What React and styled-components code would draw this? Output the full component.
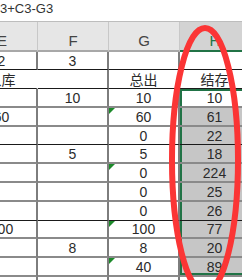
import styled, { createGlobalStyle } from "styled-components";

const GlobalStyle = createGlobalStyle`
  html, body {
    margin: 0;
    padding: 0;
    background: #ffffff;
    overflow: hidden;
  }
  body {
    font-family: "Liberation Sans", "Noto Sans CJK SC", sans-serif;
  }
`;

const Page = styled.div`
  position: relative;
  width: 242px;
  height: 280px;
  overflow: hidden;
  background: #ffffff;
`;

const FormulaBar = styled.div`
  height: 21px;
  border-bottom: 1px solid #bdbdbd;
  font-size: 13px;
  line-height: 18px;
  color: #333;
  white-space: nowrap;
`;

const Sheet = styled.div`
  display: grid;
  grid-template-columns: repeat(4, 71px);
  margin-left: -33px;
  width: 284px;
`;

const ColHead = styled.div`
  box-sizing: border-box;
  height: 30px;
  display: flex;
  align-items: flex-end;
  justify-content: center;
  padding-bottom: 1px;
  font-size: 15px;
  background: ${(p) => (p.$active ? "#d3d3d3" : "#e6e6e6")};
  color: ${(p) => (p.$active ? "#217346" : "#444")};
  border-right: 1px solid ${(p) => (p.$active ? "#bcbcbc" : "#c8c8c8")};
  border-bottom: 2px solid ${(p) => (p.$active ? "#217346" : "#a8a8a8")};
`;

const frames = {
  top: "inset 2px 0 0 #217346, inset 0 2px 0 #217346",
  side: "inset 2px 0 0 #217346",
  bottom: "inset 2px 0 0 #217346, inset 0 -2px 0 #217346",
};

const Cell = styled.div`
  position: relative;
  box-sizing: border-box;
  height: ${(p) => p.$h}px;
  display: flex;
  align-items: center;
  justify-content: center;
  font-size: 14px;
  color: #2b2b2b;
  white-space: nowrap;
  background: ${(p) => (p.$shade ? "#c6c6c6" : "#ffffff")};
  border-right: 2px solid ${(p) => (p.$open ? "transparent" : "#7d7d7d")};
  border-bottom: ${(p) => (p.$dark ? "1px solid #1a1a1a" : "2px solid #8a8a8a")};
  box-shadow: ${(p) => (p.$frame ? frames[p.$frame] : "none")};

  &::before {
    content: "";
    display: ${(p) => (p.$flag ? "block" : "none")};
    position: absolute;
    left: 0;
    top: 0;
    width: 0;
    height: 0;
    border-top: 6px solid #1c8a2a;
    border-right: 6px solid transparent;
  }
`;

const Annotation = styled.svg`
  position: absolute;
  left: 0;
  top: 0;
  pointer-events: none;
`;

const topRows = [
  { h: 18, dark: true, cells: ["2", "3", "", ""] },
  { h: 19, dark: true, open: 0, cells: ["入库", "", "总出", "结存"] },
];

const dataRows = [
  { h: 19, dark: false, cells: ["", "10", "10", "10"] },
  { h: 19, dark: false, flag: true, cells: ["60", "", "60", "61"] },
  { h: 18, dark: true, cells: ["", "", "0", "22"] },
  { h: 19, dark: false, cells: ["", "5", "5", "18"] },
  { h: 19, dark: false, flag: true, cells: ["", "", "0", "224"] },
  { h: 19, dark: false, cells: ["", "", "0", "25"] },
  { h: 19, dark: true, cells: ["", "", "0", "26"] },
  { h: 18, dark: false, flag: true, cells: ["100", "", "100", "77"] },
  { h: 19, dark: false, cells: ["", "8", "8", "20"] },
  { h: 19, dark: false, flag: true, cells: ["", "", "40", "89"] },
];

const App = () => {
  const last = dataRows.length - 1;
  return (
    <>
      <GlobalStyle />
      <Page>
        <FormulaBar>3+C3-G3</FormulaBar>
        <Sheet>
          {["E", "F", "G", "H"].map((c) => (
            <ColHead key={c} $active={c === "H"}>
              {c}
            </ColHead>
          ))}
          {topRows.map((row, r) =>
            row.cells.map((v, c) => (
              <Cell key={`t${r}-${c}`} $h={row.h} $dark={row.dark} $open={row.open === c}>
                {v}
              </Cell>
            ))
          )}
          {dataRows.map((row, r) =>
            row.cells.map((v, c) => (
              <Cell
                key={`d${r}-${c}`}
                $h={row.h}
                $dark={row.dark}
                $flag={row.flag && c === 2}
                $shade={c === 3 && r > 0}
                $frame={c === 3 ? (r === 0 ? "top" : r === last ? "bottom" : "side") : null}
              >
                {v}
              </Cell>
            ))
          )}
          {[0, 1, 2, 3].map((c) => (
            <Cell key={`p${c}`} $h={19} />
          ))}
        </Sheet>
        <Annotation width="242" height="280" viewBox="0 0 242 280">
          <ellipse
            cx="205"
            cy="160"
            rx="33"
            ry="132"
            fill="none"
            stroke="#fb3535"
            strokeWidth="6"
          />
        </Annotation>
      </Page>
    </>
  );
};

export default App;
